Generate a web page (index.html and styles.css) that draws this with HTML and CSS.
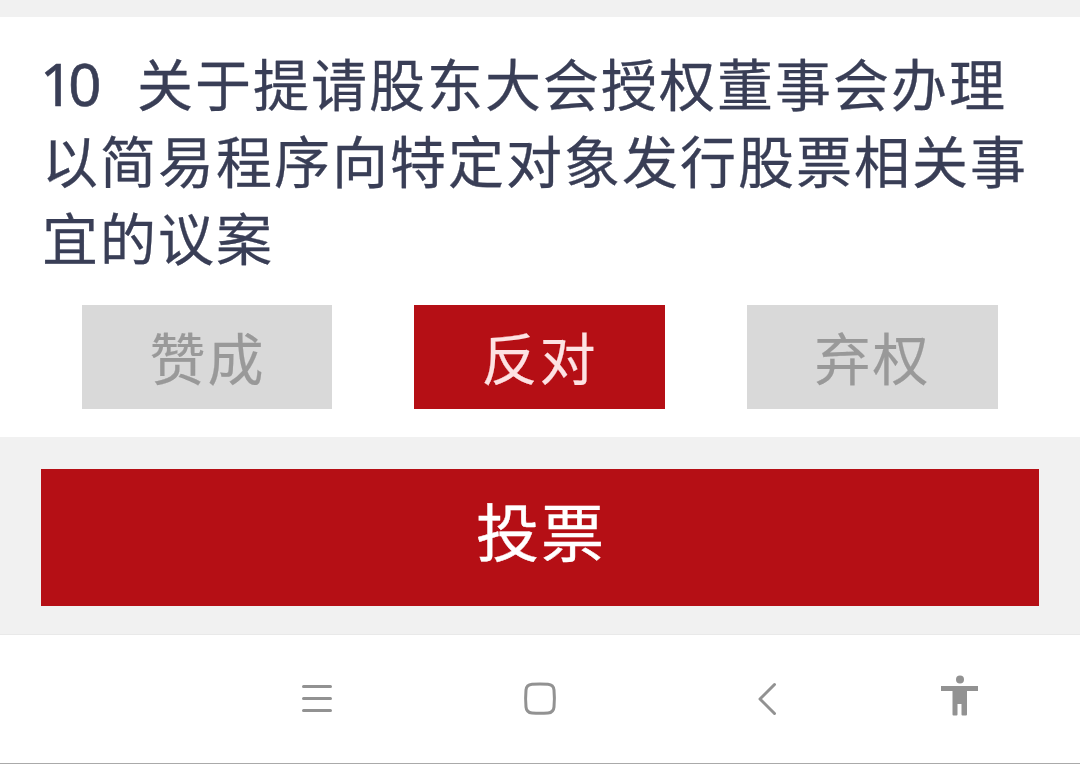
FILE: index.html
```html
<!DOCTYPE html>
<html lang="zh-CN">
<head>
<meta charset="utf-8">
<title>投票</title>
<link rel="stylesheet" href="styles.css">
</head>
<body>
<main class="screen">
  <section class="proposal">
    <h1 class="title"><span class="line"><span class="number">10</span>关于提请股东大会授权董事会办理</span><span class="line">以简易程序向特定对象发行股票相关事</span><span class="line">宜的议案</span></h1>
    <div class="options">
      <button class="option">赞成</button>
      <button class="option selected">反对</button>
      <button class="option">弃权</button>
    </div>
  </section>
  <section class="submit-area"><button class="submit">投票</button></section>
  <nav class="navbar">
    <svg class="nav-icons" viewBox="0 0 1080 129" fill="none" stroke="#929292" stroke-width="3" stroke-linecap="round" stroke-linejoin="round">
      <path d="M303.500 51.500H330.500M303.500 63.500H330.500M303.500 75.500H330.500"/>
      <path d="M532 49.300Q540 48.700 548 49.300Q553.500 49.800 554 55Q554.800 63.500 554 72Q553.500 77.500 548 78Q540 78.600 532 78Q526.500 77.500 526 72Q525.200 63.500 526 55Q526.500 49.800 532 49.300Z"/>
      <path d="M774.500 49.500L760 64L774.500 78.500"/>
      <g fill="#929292" stroke="none"><circle cx="960" cy="44.500" r="4"/><path d="M941 51H978V56H967V79.500Q967 80.500 966 80.500H962.500Q961.500 80.500 961.500 79.500V69H957.500V79.500Q957.500 80.500 956.500 80.500H953.500Q952.500 80.500 952.500 79.500V56H941Z"/></g>
    </svg>
  </nav>
</main>
</body>
</html>
```
FILE: styles.css
```css
* { box-sizing: border-box; }
body { margin: 0; font-family: "Noto Sans CJK SC", sans-serif; }
.screen { height: 764px; display: flex; flex-direction: column; background: #f1f1f1; overflow: hidden; }
.proposal { margin-top: 17px; height: 420px; padding: 26px 42px 28px; background: #fff; display: flex; flex-direction: column; justify-content: space-between; }
.title { margin: 0; color: #393e56; font-size: 56px; font-weight: 400; line-height: 77px; letter-spacing: 2px; -webkit-text-stroke: 0.3px currentColor; }
.line { display: block; height: 77px; white-space: nowrap; }
.number { display: inline-block; width: 95px; font-family: "Noto Sans", sans-serif; font-size: 58px; line-height: 1; letter-spacing: -5px; text-indent: -2px; -webkit-text-stroke: 0.6px currentColor; }
.options { display: flex; justify-content: space-between; padding: 0 40px; }
.option { width: 251px; height: 104px; padding: 0 0 3px; border: 0; background: #d9d9d9; color: #999; font: 56px/101px "Noto Sans CJK SC", sans-serif; letter-spacing: 2px; -webkit-text-stroke: 0.2px currentColor; }
.option:first-child { width: 250px; padding-left: 1px; }
.selected { background: #b50f15; color: #fde2e3; }
.submit-area { height: 197px; padding: 32px 41px 28px; }
.submit { width: 100%; height: 137px; padding: 0 0 17px 2px; border: 0; background: #b50f15; color: #fff; font: 63px/120px "Noto Sans CJK SC", sans-serif; letter-spacing: 2px; -webkit-text-stroke: 0.4px currentColor; }
.navbar { height: 130px; background: #fff; border-top: 1px solid #e9e9e9; border-bottom: 1px solid #aaa; }
.nav-icons { display: block; width: 1080px; height: 129px; }
```
